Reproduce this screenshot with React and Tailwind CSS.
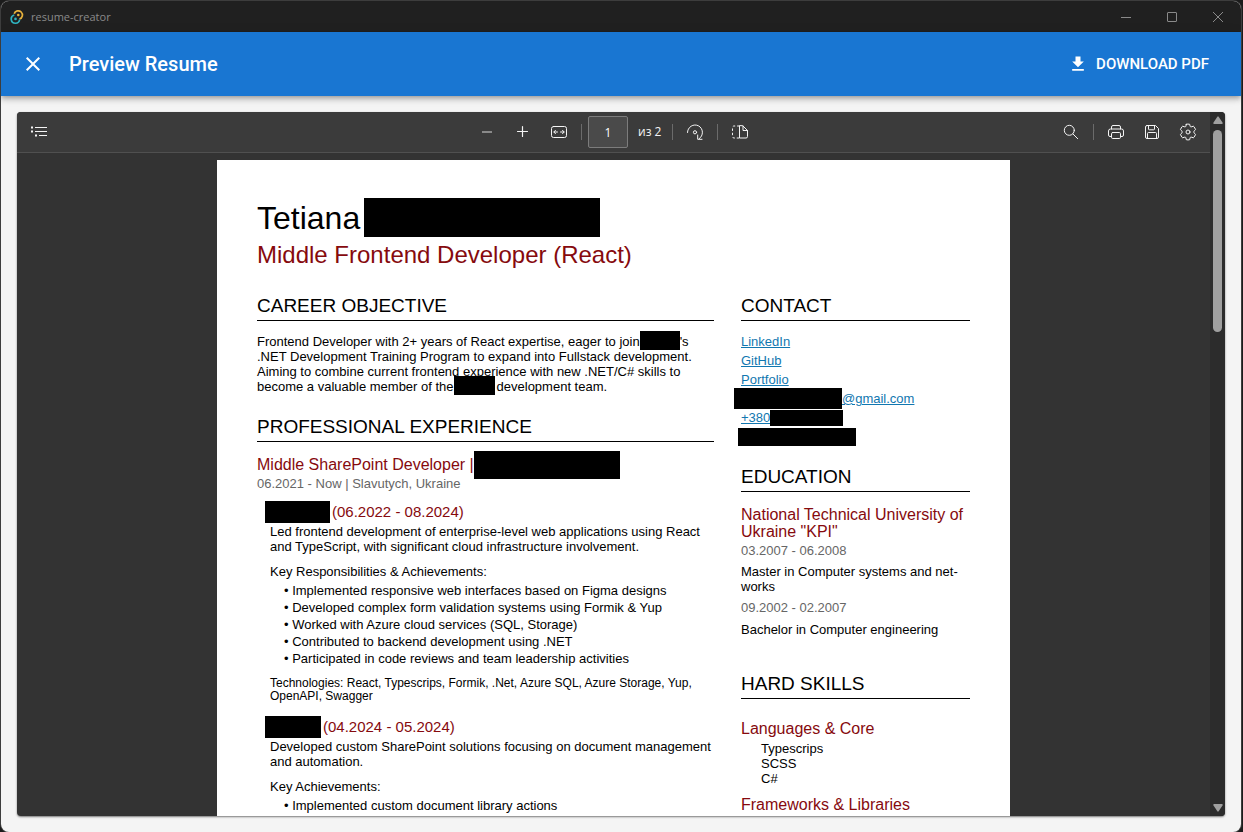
import { MdClose, MdDownload } from "react-icons/md";

const DOC_FONT = "font-['Liberation_Sans',Arial,sans-serif]";
const UI_FONT = "font-['Open_Sans','Noto_Sans',sans-serif]";
const APP_FONT = "font-['Roboto',sans-serif]";

function TauriLogo() {
  return (
    <svg width="14" height="16" viewBox="0 0 14 16" fill="none" aria-hidden="true">
      <path d="M4.200 4.800A4.200 4.200 0 1 1 9.500 10" stroke="#e8b23c" strokeWidth="1.700" />
      <path d="M9.600 10.500A4.200 4.200 0 1 1 4.300 6" stroke="#2fb3c0" strokeWidth="1.700" />
      <circle cx="8.300" cy="6" r="1.300" fill="#e8b23c" />
      <circle cx="5.500" cy="9.900" r="1.300" fill="#2fb3c0" />
    </svg>
  );
}

function TitleBar() {
  const button = "flex w-[46px] items-center justify-center";
  return (
    <div className="flex h-[31px] shrink-0 items-stretch justify-between bg-[#202020] text-[#8a8a8a]">
      <div className="flex items-center gap-[7px] pl-[9px]">
        <TauriLogo />
        <span className={`text-[11px] leading-4 ${UI_FONT}`}>resume-creator</span>
      </div>
      <div className="flex">
        <button type="button" aria-label="Minimize" className={button}>
          <svg width="10" height="10" viewBox="0 0 10 10" stroke="currentColor"><path d="M0 5.5h10" /></svg>
        </button>
        <button type="button" aria-label="Maximize" className={button}>
          <svg width="10" height="10" viewBox="0 0 10 10" stroke="currentColor" fill="none"><rect x=".5" y=".5" width="9" height="9" rx=".5" /></svg>
        </button>
        <button type="button" aria-label="Close window" className={button}>
          <svg width="10" height="10" viewBox="0 0 10 10" stroke="currentColor"><path d="M0 0l10 10M10 0L0 10" /></svg>
        </button>
      </div>
    </div>
  );
}

function AppBar() {
  return (
    <header className={`relative flex h-16 shrink-0 items-center justify-between bg-[#1976d2] pr-6 pl-5 text-white shadow-[0_2px_4px_-1px_rgba(0,0,0,0.2),0_4px_5px_rgba(0,0,0,0.14),0_1px_10px_rgba(0,0,0,0.12)] ${APP_FONT}`}>
      <div className="flex items-center gap-6">
        <button type="button" aria-label="Close preview"><MdClose size={24} /></button>
        <h1 className="text-xl font-medium">Preview Resume</h1>
      </div>
      <button type="button" className="flex items-center gap-2 px-2 text-[15px] leading-6 font-medium uppercase">
        <MdDownload size={20} />
        Download PDF
      </button>
    </header>
  );
}

function Glyph({ children }) {
  return (
    <svg width="20" height="20" viewBox="0 0 20 20" fill="none" stroke="currentColor" strokeLinecap="round" strokeLinejoin="round" aria-hidden="true">
      {children}
    </svg>
  );
}

const gear =
  "M8.300 2.300 7.900 4.200Q7.700 4.900 6.900 4.900L4.900 4.300Q4.300 4.200 4 4.700L2.600 7.200Q2.300 7.700 2.800 8.100L4.100 9.300Q4.600 9.900 4.100 10.700L2.800 11.900Q2.300 12.300 2.600 12.800L4 15.300Q4.300 15.800 4.900 15.700L6.900 15.100Q7.700 15.100 7.900 15.800L8.300 17.700Q10 18.200 11.700 17.700L12.100 15.800Q12.300 15.100 13.100 15.100L15.100 15.700Q15.700 15.800 16 15.300L17.400 12.800Q17.700 12.300 17.200 11.900L15.900 10.700Q15.400 9.900 15.900 9.300L17.200 8.100Q17.700 7.700 17.400 7.200L16 4.700Q15.700 4.200 15.100 4.300L13.100 4.900Q12.300 4.900 12.100 4.200L11.700 2.300Q10 1.800 8.300 2.300z";

const icons = {
  contents: (
    <g strokeLinecap="butt">
      <path d="M6 5.500h12M6 9.500h12M10 13.500h8" />
      <path d="M2 5.500h2M2 9.500h2M6 13.500h2" strokeWidth="2" />
    </g>
  ),
  zoomOut: <path d="M5 10h10" stroke="#a5a5a5" strokeWidth="1.500" strokeLinecap="butt" />,
  zoomIn: <path d="M4.500 9.500h10M9.500 4.500v10" strokeWidth="1.200" />,
  fit: (
    <>
      <rect x="2.500" y="4.500" width="15" height="11" rx="2" />
      <path d="M5 10h3.500M11.500 10H15M6.500 8.300 4.800 10l1.700 1.700M13.500 8.300l1.700 1.700-1.700 1.700" />
    </>
  ),
  rotate: (
    <>
      <path d="M2.500 10.500a7.500 7.500 0 1 1 11.700 6.200" />
      <path d="M12.700 13v4.300H17" />
      <circle cx="10" cy="10.300" r="1.600" />
    </>
  ),
  pageView: (
    <>
      <path d="M9.500 4v12h6.500a1.500 1.500 0 0 0 1.500-1.500V8.500L13 4z" />
      <path d="M13 4v4.500h4.500" />
      <path d="M9.500 4H4A1.500 1.500 0 0 0 2.500 5.500v9A1.500 1.500 0 0 0 4 16h5.500" strokeDasharray="2.400 1.900" strokeLinecap="butt" />
    </>
  ),
  search: (
    <>
      <circle cx="8.300" cy="8.300" r="5" />
      <path d="m12 12 4.700 4.700" />
    </>
  ),
  print: (
    <>
      <path d="M5.500 14.500H4A1.500 1.500 0 0 1 2.500 13V9A2 2 0 0 1 4.500 7h11a2 2 0 0 1 2 2v4a1.500 1.500 0 0 1-1.500 1.500h-1.500" />
      <path d="M5.500 7V5A1.500 1.500 0 0 1 7 3.500h6A1.500 1.500 0 0 1 14.500 5v2" />
      <rect x="5.500" y="10.500" width="9" height="6" rx="1.200" />
    </>
  ),
  save: (
    <>
      <path d="M5 3.500h8.500l3 3V15a1.500 1.500 0 0 1-1.500 1.500H5A1.500 1.500 0 0 1 3.500 15V5A1.500 1.500 0 0 1 5 3.500z" />
      <path d="M6.500 3.500V7a.8.8 0 0 0 .8.800h4.400a.8.8 0 0 0 .8-.800V3.500M5.500 16.500v-5a1 1 0 0 1 1-1h7a1 1 0 0 1 1 1v5" />
    </>
  ),
  settings: (
    <>
      <path d={gear} />
      <circle cx="10" cy="10" r="2" />
    </>
  ),
};

function Tool({ label, icon }) {
  return (
    <button type="button" aria-label={label} className="flex h-8 w-8 items-center justify-center">
      <Glyph>{icons[icon]}</Glyph>
    </button>
  );
}

function Divider() {
  return <div className="mx-1.5 h-4 w-px bg-[#6b6b6b]" />;
}

function Toolbar() {
  return (
    <div className="grid h-[41px] shrink-0 grid-cols-[1fr_auto_1fr] items-center border-b border-[#505050] bg-[#3b3b3b] px-1.5 text-[#f4f4f4]">
      <div className="flex"><Tool label="Contents" icon="contents" /></div>
      <div className={`flex items-center text-xs ${UI_FONT}`}>
        <div className="flex gap-1">
          <Tool label="Zoom out" icon="zoomOut" />
          <Tool label="Zoom in" icon="zoomIn" />
          <Tool label="Fit to width" icon="fit" />
        </div>
        <Divider />
        <input
          aria-label="Page number"
          defaultValue="1"
          className="h-8 w-10 rounded-xs border border-[#7c7c7c] bg-[#4a4a4a] text-center text-white"
        />
        <span className="w-[38px] pl-2.5 whitespace-nowrap">из 2</span>
        <Divider />
        <Tool label="Rotate" icon="rotate" />
        <Divider />
        <Tool label="Page view" icon="pageView" />
      </div>
      <div className="flex items-center justify-end">
        <Tool label="Search" icon="search" />
        <Divider />
        <div className="flex gap-1">
          <Tool label="Print" icon="print" />
          <Tool label="Save" icon="save" />
          <Tool label="Settings" icon="settings" />
        </div>
      </div>
    </div>
  );
}

function ScrollBar() {
  return (
    <div className="flex w-[15px] shrink-0 flex-col items-center bg-[#2c2c2c] py-1">
      <svg width="10" height="8" viewBox="0 0 10 8" fill="#9f9f9f" aria-hidden="true"><path d="M4.200.9a1 1 0 0 1 1.600 0L9.500 6.500a1 1 0 0 1-.8 1.500H1.300a1 1 0 0 1-.8-1.500z" /></svg>
      <div className="mt-1.5 flex w-[9px] flex-1 flex-col">
        <div className="h-[30%] rounded-full bg-[#9f9f9f]" />
      </div>
      <svg width="10" height="8" viewBox="0 0 10 8" fill="#9f9f9f" aria-hidden="true"><path d="M4.200 7.100a1 1 0 0 0 1.600 0L9.500 1.500A1 1 0 0 0 8.700 0H1.300a1 1 0 0 0-.8 1.500z" /></svg>
    </div>
  );
}

function SectionTitle({ children }) {
  return <h3 className="border-b border-black pb-0.5 text-[19px] leading-6">{children}</h3>;
}

function Bar({ className }) {
  return <span aria-hidden="true" className={`shrink-0 bg-black ${className}`} />;
}

function Project({ bar, dates, summary, listTitle, items, technologies }) {
  return (
    <div className="pl-[13px]">
      <h5 className="-ml-[5px] flex h-[17px] items-center gap-0.5 text-[15px] leading-[17px] text-[#860a0e]">
        <Bar className={bar} />
        {dates}
      </h5>
      <p className="mt-1">{summary}</p>
      <p className="mt-2.5">{listTitle}</p>
      <ul className="mt-[3px] pl-3.5 leading-[17px]">
        {items.map((item) => (
          <li key={item}>• {item}</li>
        ))}
      </ul>
      {technologies && <p className="mt-2.5 text-xs leading-[13px]">{technologies}</p>}
    </div>
  );
}

function MainColumn() {
  return (
    <div className="min-w-0 flex-1">
      <SectionTitle>CAREER OBJECTIVE</SectionTitle>
      <p className="mt-[13px]">
        Frontend Developer with 2+ years of React expertise, eager to join
        <Bar className="-mt-1.5 -mb-0.5 inline-block h-[19px] w-10 align-middle" />
        's .NET Development Training Program to expand into Fullstack development. Aiming to combine current frontend
        experience with new .NET/C# skills to become a valuable member of the
        <Bar className="-mt-1.5 mr-0.5 -mb-0.5 inline-block h-[19px] w-[41px] align-middle" />
        development team.
      </p>
      <div className="mt-[21px]">
        <SectionTitle>PROFESSIONAL EXPERIENCE</SectionTitle>
      </div>
      <h4 className="mt-3.5 flex h-[17px] items-center text-base leading-[17px] text-[#860a0e]">
        Middle SharePoint Developer |
        <Bar className="h-7 w-[146px]" />
      </h4>
      <p className="mt-[3px] text-[#666]">06.2021 - Now | Slavutych, Ukraine</p>
      <div className="mt-3 flex flex-col gap-[15px]">
        <Project
          bar="h-[22px] w-[65px]"
          dates="(06.2022 - 08.2024)"
          summary="Led frontend development of enterprise-level web applications using React and TypeScript, with significant cloud infrastructure involvement."
          listTitle="Key Responsibilities & Achievements:"
          items={[
            "Implemented responsive web interfaces based on Figma designs",
            "Developed complex form validation systems using Formik & Yup",
            "Worked with Azure cloud services (SQL, Storage)",
            "Contributed to backend development using .NET",
            "Participated in code reviews and team leadership activities",
          ]}
          technologies="Technologies: React, Typescrips, Formik, .Net, Azure SQL, Azure Storage, Yup, OpenAPI, Swagger"
        />
        <Project
          bar="h-[22px] w-[56px]"
          dates="(04.2024 - 05.2024)"
          summary="Developed custom SharePoint solutions focusing on document management and automation."
          listTitle="Key Achievements:"
          items={["Implemented custom document library actions"]}
        />
      </div>
    </div>
  );
}

function SideColumn() {
  const link = "text-[#1177b0] underline underline-offset-1";
  const row = "flex h-[19px] items-center";
  return (
    <div className="w-[229px] shrink-0">
      <SectionTitle>CONTACT</SectionTitle>
      <ul className="mt-[11px]">
        <li className={row}><a href="#linkedin" className={link}>LinkedIn</a></li>
        <li className={row}><a href="#github" className={link}>GitHub</a></li>
        <li className={row}><a href="#portfolio" className={link}>Portfolio</a></li>
        <li className={row}>
          <Bar className="-ml-[7px] h-[21px] w-[108px]" />
          <a href="#email" className={link}>@gmail.com</a>
        </li>
        <li className={row}>
          <a href="#phone" className={link}>+380</a>
          <Bar className="h-4 w-[73px]" />
        </li>
        <li className={row}><Bar className="-ml-[3px] h-[18px] w-[118px]" /></li>
      </ul>
      <div className="mt-[19px]"><SectionTitle>EDUCATION</SectionTitle></div>
      <h4 className="mt-3.5 text-base leading-[17px] text-[#860a0e]">National Technical University of Ukraine "KPI"</h4>
      <p className="mt-[3px] text-[#666]">03.2007 - 06.2008</p>
      <p className="mt-1.5">Master in Computer systems and net&shy;works</p>
      <p className="mt-1.5 text-[#666]">09.2002 - 02.2007</p>
      <p className="mt-[7px]">Bachelor in Computer engineering</p>
      <div className="mt-[35px]"><SectionTitle>HARD SKILLS</SectionTitle></div>
      <h4 className="mt-[21px] text-base leading-[17px] text-[#860a0e]">Languages &amp; Core</h4>
      <ul className="mt-1 pl-5">
        <li>Typescrips</li>
        <li>SCSS</li>
        <li>C#</li>
      </ul>
      <h4 className="mt-2.5 text-base leading-[17px] text-[#860a0e]">Frameworks &amp; Libraries</h4>
    </div>
  );
}

function Sheet() {
  return (
    <article className={`w-[793px] shrink-0 self-start bg-white px-10 pt-[38px] pb-10 text-[13px] leading-[15px] text-black ${DOC_FONT}`}>
      <div className="flex h-[39px] items-center gap-1 text-[32px] leading-9">
        Tetiana
        <Bar className="h-[39px] w-[236px]" />
      </div>
      <h2 className="mt-1 text-2xl leading-7 text-[#860a0e]">Middle Frontend Developer (React)</h2>
      <div className="mt-[25px] flex gap-[27px]">
        <MainColumn />
        <SideColumn />
      </div>
    </article>
  );
}

export default function App() {
  return (
    <div className="h-screen bg-[#1b1b1b] pt-px pr-0.5 pl-px">
      <div className="flex h-full flex-col overflow-hidden rounded-lg bg-[#f4f4f4] shadow-[0_0_0_1px_#3d3d3d]">
        <TitleBar />
        <AppBar />
        <main className="flex min-h-0 flex-1 p-4">
          <section aria-label="Document preview" className="flex min-w-0 flex-1 overflow-hidden rounded bg-[#333] shadow-[0_1px_2px_rgba(0,0,0,0.5)]">
            <div className="flex min-w-0 flex-1 flex-col">
              <Toolbar />
              <div className="flex min-h-0 flex-1 justify-center overflow-hidden pt-[7px]">
                <Sheet />
              </div>
            </div>
            <ScrollBar />
          </section>
        </main>
      </div>
    </div>
  );
}
